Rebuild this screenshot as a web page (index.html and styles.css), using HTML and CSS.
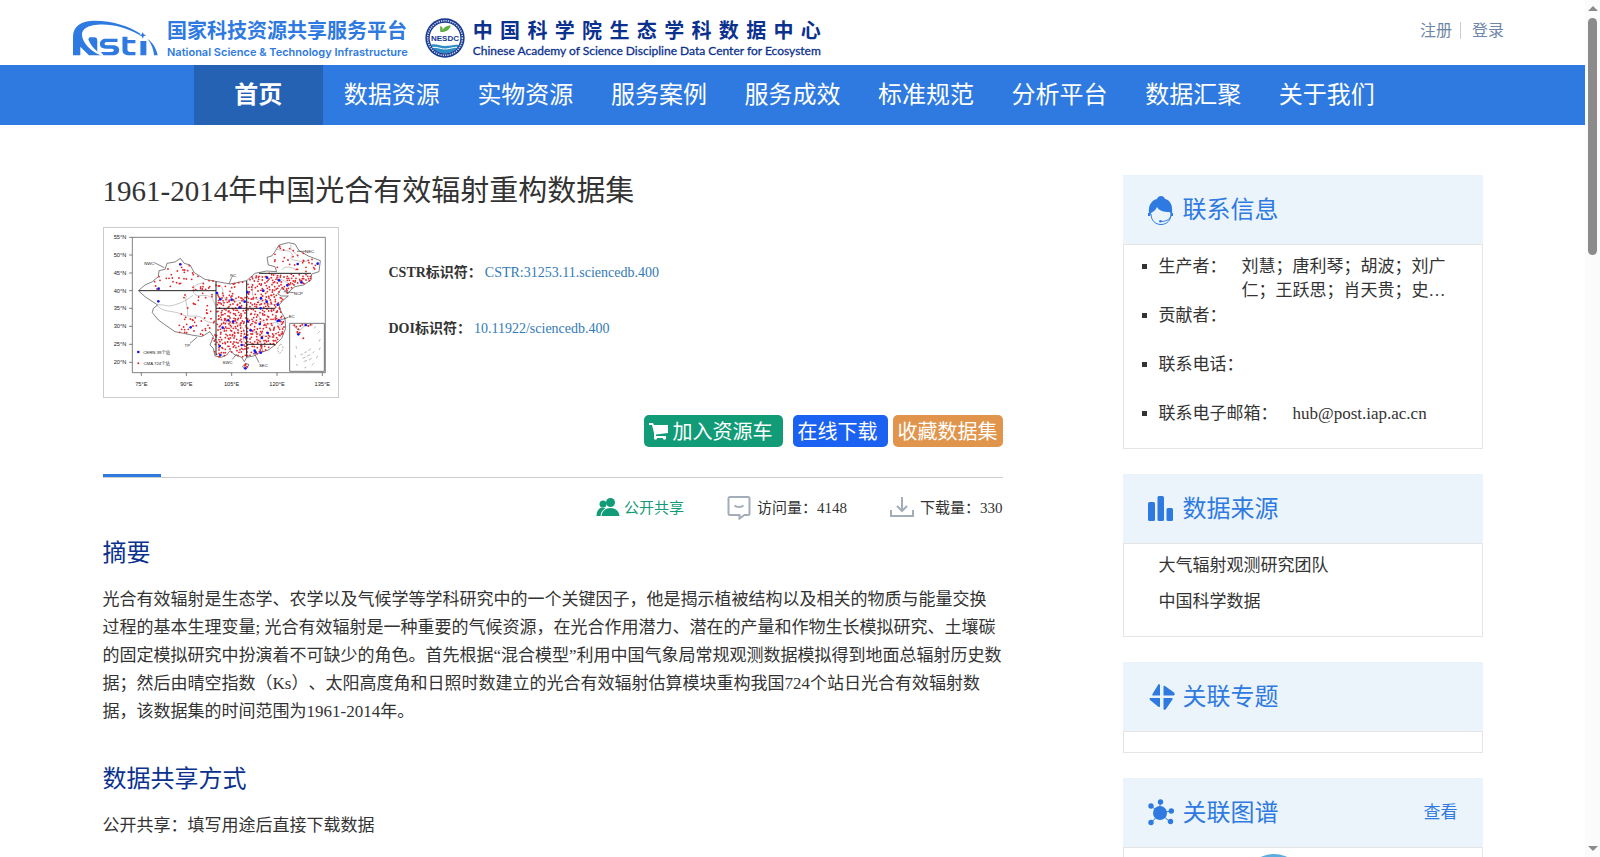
FILE: index.html
```html
<!DOCTYPE html>
<html lang="zh-CN">
<head>
    <meta charset="UTF-8">
    <meta name="viewport" content="width=device-width, initial-scale=1.0">
    <title>1961-2014年中国光合有效辐射重构数据集</title>
    <link rel="stylesheet" href="styles.css">
</head>
<body>
    <div class="page">
        <header class="header">
            <a class="brand" href="#">
                <svg class="brand-mark" viewBox="0 0 256 108" aria-hidden="true">
                    <path d="M0 106V50C0 18 26 2 64 2c60 0 106 18 140 40l-4 3C160 22 118 11 74 14 46 16 27 26 27 44c1 24 26 50 57 62H48L22 80v26z"/>
                    <path d="M50 52h14q9 0 9 9v34C62 86 52 74 46 58z"/>
                    <path d="M134 66h-30c-6 0-9 2-9 5s3 5 9 5h15c13 0 20 5 20 14 0 11-8 16-20 16H92l-8-10h30c6 0 9-1 9-5 0-3-3-5-9-5H99c-12 0-18-5-18-14 0-10 7-16 19-16h34z"/>
                    <path d="M149 50h15v10h24v10h-24v19c0 5 3 7 8 7h16v10h-18c-14 0-21-5-21-16z"/>
                    <path d="M203 63h18v43h-18z"/>
                    <path d="M210 36l3 7 7 3-7 3-3 7-3-7-7-3 7-3z"/>
                    <path d="M224 56c16 12 27 28 31 50h-11c-1-18-8-35-20-50z"/>
                </svg>
                <span class="brand-text">
                    <span class="brand-cn">国家科技资源共享服务平台</span>
                    <span class="brand-en">National Science &amp; Technology Infrastructure</span>
                </span>
            </a>
            <a class="center" href="#">
                <svg class="center-mark" viewBox="0 0 120 120" aria-hidden="true">
                    <circle cx="60" cy="60" r="59" fill="#17388f"/>
                    <circle cx="60" cy="60" r="52" fill="none" stroke="#c9d3ea" stroke-width="5" stroke-dasharray="4 3"/>
                    <circle cx="60" cy="60" r="46" fill="#fff"/>
                    <path d="M18 80c14-4 26 4 42 4s28-6 42-3c-7 15-22 25-42 25S25 96 18 80z" fill="#2f8fc4"/>
                    <path d="M22 88c16-2 26 6 40 5s24-6 34-5" fill="none" stroke="#fff" stroke-width="3"/>
                    <path d="M46 42c-1-8 0-12-1-18 8 2 9 8 8 14 2-10 12-14 24-16-2 10-8 18-22 20z" fill="#5fae45"/>
                    <text x="60" y="68" text-anchor="middle">NESDC</text>
                </svg>
                <span class="center-text">
                    <span class="center-cn">中国科学院生态学科数据中心</span>
                    <span class="center-en">Chinese Academy of Science Discipline Data Center for Ecosystem</span>
                </span>
            </a>
            <div class="account">
                <a href="#">注册</a>
                <a href="#">登录</a>
            </div>
        </header>

        <nav class="nav">
            <div class="nav-inner">
                <a class="active" href="#">首页</a>
                <a href="#">数据资源</a>
                <a href="#">实物资源</a>
                <a href="#">服务案例</a>
                <a href="#">服务成效</a>
                <a href="#">标准规范</a>
                <a href="#">分析平台</a>
                <a href="#">数据汇聚</a>
                <a href="#">关于我们</a>
            </div>
        </nav>

        <div class="container">
            <main class="detail">
                <h1>1961-2014年中国光合有效辐射重构数据集</h1>
                <div class="summary">
                    <svg class="thumb" id="station-map" viewBox="27 24 702 507" role="img" aria-label="站点分布图">
                        <g class="land">
                            <path id="outline" d="M130 212L150 195L172 185L190 170L192 152L210 148L216 130L240 126L256 115L268 130L285 135L298 158L330 178L362 184L405 192L455 182L480 160L515 153L545 155L540 140L520 135L516 112L530 108L540 95L552 75L580 68L600 72L612 92L640 108L676 122L672 155L650 162L648 180L625 195L600 200L585 212L578 222L572 212L560 205L548 222L560 228L580 228L565 240L552 255L558 275L570 295L572 325L560 355L540 375L520 390L490 400L475 408L455 412L448 425L440 412L420 405L405 392L395 405L378 412L360 408L355 385L345 375L355 350L345 335L320 350L290 345L265 340L240 335L215 318L190 300L172 278L175 265L188 255L165 240L150 230Z"/>
                            <path d="M443 438L452 430L462 434L455 446L446 445Z"/>
                        </g>
                        <g class="province">
                            <path d="M298 200c8-10 20-8 30-14M295 195c6 12-4 20 4 28s30 0 44 6 14 24 20 30M184 256c20-6 30 6 50 0s34-10 60-30M186 256c16 20 40 16 60 22s20 12 50 10 26 20 60 20M274 228c-6 20 6 30 4 58"/>
                            <path d="M540 82c10 14 30 4 46 14s-10 20 10 24 30 6 44 2M588 74c-6 20 20 24 22 40M560 150c10-14 30-10 42 0M380 200c10 20-6 30 20 40s34-6 56 8M470 190c10 20-10 40 20 50s30 20 60 10M480 280c20 10 20 40 50 30s20 20 40 10M380 300c20 20 40 0 60 20s-10 40 16 50M470 340c20-10 40 20 70 10M500 350c-10 20 10 30 0 46M540 160c10 20 30 20 50 36"/>
                        </g>
                        <g id="dots" fill="#e0262c"></g>
                        <path class="grid" d="M132 212H363M363 184V405M455 182V412M363 265H541M492 160H648M455 373H540"/>
                        <g class="pointer">
                            <path d="M178 128L208 143M410 172L402 192M606 94L632 94M566 215L596 218M556 300L580 292M306 352L285 370M412 418L425 402M480 404L492 428"/>
                        </g>
                        <g class="inset">
                            <path class="box" d="M584 310H688V454H584Z"/>
                            <path d="M592 314c8 10 10 6 14 14l10 2 12-12 26-4M604 340l8-4M658 325l4-6M668 340l6-6M672 365l4-8M672 390l4-8M664 415l4-8M650 436l6-6M628 444l6-3M604 432l4 6M600 405l2 8M603 378l2 8M616 405l8-4M628 398l8-3M640 392l8-6M622 415l10-4M636 408l10-4M626 425l10-4M642 420l8-5M652 400l6-6"/>
                        </g>
                        <g id="inset-dots" fill="#e0262c"></g>
                        <path class="taiwan" d="M556 373c8 0 10 10 6 18l-8 10c-8-6-8-20 2-28z"/>
                        <g id="cern" fill="#1414f0"></g>
                        <path class="frame" d="M112 52H691V458H112ZM112 52h-10M112 105h-10M112 159h-10M112 212h-10M112 265h-10M112 319h-10M112 373h-10M112 427h-10M139 458v10M274 458v10M410 458v10M546 458v10M682 458v10"/>
                        <g class="axis">
                            <text x="75" y="58">55°N</text>
                            <text x="75" y="111">50°N</text>
                            <text x="75" y="165">45°N</text>
                            <text x="75" y="218">40°N</text>
                            <text x="75" y="271">35°N</text>
                            <text x="75" y="325">30°N</text>
                            <text x="75" y="379">25°N</text>
                            <text x="75" y="433">20°N</text>
                            <text x="139" y="497">75°E</text>
                            <text x="274" y="497">90°E</text>
                            <text x="410" y="497">105°E</text>
                            <text x="546" y="497">120°E</text>
                            <text x="682" y="497">135°E</text>
                        </g>
                        <g class="region">
                            <text x="163" y="134">NWC</text>
                            <text x="415" y="170">NC</text>
                            <text x="644" y="98">NEC</text>
                            <text x="610" y="225">NCP</text>
                            <text x="590" y="294">EC</text>
                            <text x="277" y="382">TP</text>
                            <text x="398" y="431">SWC</text>
                            <text x="505" y="442">SEC</text>
                            <text x="185" y="401">CERN 39个站</text>
                            <text x="185" y="436">CMA 724个站</text>
                        </g>
                    </svg>
                    <dl class="identifiers">
                        <div>
                            <dt>CSTR标识符：</dt>
                            <dd><a href="#">CSTR:31253.11.sciencedb.400</a></dd>
                        </div>
                        <div>
                            <dt>DOI标识符：</dt>
                            <dd><a href="#">10.11922/sciencedb.400</a></dd>
                        </div>
                    </dl>
                </div>

                <div class="actions">
                    <button type="button" class="btn btn-cart">
                        <svg viewBox="0 0 19 18" aria-hidden="true">
                            <path d="M0 1h4l1 2h14v8L7 12.500v1.500h10v2H5V11L3 3H0z"/>
                            <circle cx="6.500" cy="16" r="1.700"/>
                            <circle cx="15.500" cy="16" r="1.700"/>
                        </svg>
                        加入资源车
                    </button>
                    <button type="button" class="btn btn-download">在线下载</button>
                    <button type="button" class="btn btn-favorite">收藏数据集</button>
                </div>

                <div class="divider"></div>

                <ul class="stats">
                    <li class="open">
                        <svg viewBox="0 0 23 24" aria-hidden="true">
                            <circle cx="6.500" cy="8" r="3.500"/>
                            <path d="M0 20c0-5 2-8 6-8.500l3 1C6 14 4.500 16 4 20z"/>
                            <circle cx="14" cy="6.500" r="4.500"/>
                            <path d="M5 20c.5-5 4-8 9-8s8.500 3 9 8z"/>
                        </svg>
                        公开共享
                    </li>
                    <li>
                        <svg class="line" viewBox="0 0 23 24" aria-hidden="true">
                            <path d="M2 1h18.500q1.500 0 1.500 1.500v15q0 1.500-1.500 1.500H17l-5 3.500V19H2.500Q1 19 1 17.500v-15Q1 1 2.500 1M7 9.500c2 2 7 2 9 0"/>
                        </svg>
                        访问量：4148
                    </li>
                    <li>
                        <svg class="line" viewBox="0 0 24 24" aria-hidden="true">
                            <path d="M12 1v14M7 10l5 5 5-5M1 14v6h22v-6"/>
                        </svg>
                        下载量：330
                    </li>
                </ul>

                <section>
                    <h2>摘要</h2>
                    <p>光合有效辐射是生态学、农学以及气候学等学科研究中的一个关键因子，他是揭示植被结构以及相关的物质与能量交换过程的基本生理变量; 光合有效辐射是一种重要的气候资源，在光合作用潜力、潜在的产量和作物生长模拟研究、土壤碳的固定模拟研究中扮演着不可缺少的角色。首先根据“混合模型”利用中国气象局常规观测数据模拟得到地面总辐射历史数据；然后由晴空指数（Ks）、太阳高度角和日照时数建立的光合有效辐射估算模块重构我国724个站日光合有效辐射数据，该数据集的时间范围为1961-2014年。</p>
                </section>
                <section>
                    <h2>数据共享方式</h2>
                    <p>公开共享：填写用途后直接下载数据</p>
                </section>
            </main>

            <aside class="sidebar">
                <section class="card">
                    <header>
                        <svg viewBox="0 0 26 30" aria-hidden="true">
                            <path d="M1 17C0 9 4 4 9 3c1-4 7-4 8 0 5 1 8 6 7 14h1v3h-2c0-2-1-4-2-4-5 0-10-1-12-5-1 3-4 5-6 6l-1 3H0v-3z"/>
                            <path class="stroke" d="M3 18c0 6 4 10.500 10 10.500S23 24 23 18M13 25.500c5 0 9-2 10-6"/>
                            <circle cx="12.500" cy="25.300" r="1.300"/>
                        </svg>
                        <h3>联系信息</h3>
                    </header>
                    <ul class="contact">
                        <li><span>生产者：</span><span class="value">刘慧；唐利琴；胡波；刘广仁；王跃思；肖天贵；史…</span></li>
                        <li><span>贡献者：</span></li>
                        <li><span>联系电话：</span></li>
                        <li><span>联系电子邮箱：</span><span class="value">hub@post.iap.ac.cn</span></li>
                    </ul>
                </section>

                <section class="card">
                    <header>
                        <svg viewBox="0 0 26 30" aria-hidden="true">
                            <rect x="0" y="7" width="7" height="19" rx="1.500"/>
                            <rect x="9.500" y="1" width="6.500" height="25" rx="1.500"/>
                            <rect x="18.500" y="13" width="6.500" height="13" rx="1.500"/>
                        </svg>
                        <h3>数据来源</h3>
                    </header>
                    <ul class="sources">
                        <li>大气辐射观测研究团队</li>
                        <li>中国科学数据</li>
                    </ul>
                </section>

                <section class="card">
                    <header>
                        <svg viewBox="0 0 26 30" aria-hidden="true">
                            <path d="M10 2q1-2 2 0v10.500H4.500Q4 12 4.500 11zM15.500 4q0-2 1.500-1l9 6.500q1.500 2 0 3H15.500zM12 15v8.500q-1 1-2 0L2 17q-1-2 0-2zM15.500 15H24q1 0 .5 1.500L18 26q-2.500 2-2.500-.5z"/>
                        </svg>
                        <h3>关联专题</h3>
                    </header>
                    <div class="empty"></div>
                </section>

                <section class="card">
                    <header>
                        <svg viewBox="0 0 26 30" aria-hidden="true">
                            <path class="stroke" d="M12 14L3 7M12 14V3M12 14l11-2M12 14L3 24M12 14l10 9"/>
                            <circle cx="12" cy="14" r="7"/>
                            <circle cx="3" cy="7" r="2.700"/>
                            <circle cx="12.500" cy="3" r="2.700"/>
                            <circle cx="23.300" cy="12" r="2.700"/>
                            <circle cx="3" cy="23.500" r="2.700"/>
                            <circle cx="22.500" cy="22.500" r="2.700"/>
                        </svg>
                        <h3>关联图谱</h3>
                        <a href="#">查看</a>
                    </header>
                    <div class="graph">
                        <svg viewBox="0 0 60 60" aria-hidden="true"><circle cx="30" cy="30" r="30"/></svg>
                    </div>
                </section>
            </aside>
        </div>
    </div>

    <div class="scrollbar" aria-hidden="true">
        <span class="arrow up"></span>
        <span class="thumb-bar"></span>
        <span class="arrow down"></span>
    </div>

    <script src="map.js"></script>
</body>
</html>
```
FILE: styles.css
```css
* {
    box-sizing: border-box;
}
body {
    margin: 0;
    display: flex;
    height: 100vh;
    overflow: hidden;
    font-family: "Liberation Serif", "Noto Sans CJK SC", serif;
    font-size: 17px;
    text-spacing-trim: space-all;
    color: #333;
    background-color: #fff;
}
a {
    color: inherit;
    text-decoration: none;
}
h1, h2, h3, p, ul, dl, dd {
    margin: 0;
    padding: 0;
    font-weight: normal;
}
ul {
    list-style: none;
}
.page {
    flex: 1;
    overflow: hidden;
}

/* header */
.header {
    display: flex;
    align-items: flex-start;
    height: 65px;
    padding: 17px 81px 0 73px;
}
.brand {
    display: flex;
    gap: 9px;
    color: #2e7ae0;
}
.brand-mark {
    width: 85px;
    height: 36px;
    margin-top: 3px;
    fill: #2e7ae0;
}
.brand-text,
.center-text {
    display: flex;
    flex-direction: column;
    white-space: nowrap;
}
.brand-cn,
.center-cn {
    font: bold 20px/26px "Noto Sans CJK SC", sans-serif;
}
.brand-en {
    font: 600 11px/18px Inter, sans-serif;
}
.center {
    display: flex;
    gap: 8px;
    margin-left: 17px;
    color: #0b318f;
}
.center-mark {
    width: 40px;
    height: 40px;
    margin-top: 1px;
}
.center-mark text {
    font: bold 24px "Liberation Sans", sans-serif;
    fill: #17388f;
}
.center-cn {
    text-align: justify;
    text-align-last: justify;
}
.center-en {
    font: 12px/16px Lato, sans-serif;
    -webkit-text-stroke: 0.3px #0b318f;
}
.account {
    display: flex;
    margin-left: auto;
    margin-top: 5px;
    font-size: 16px;
    line-height: 17px;
    color: #6f87a6;
}
.account a + a {
    margin-left: 8px;
    padding-left: 11px;
    border-left: 1px solid #c5cfdc;
}

/* nav */
.nav {
    background-color: #2e7ae0;
}
.nav-inner {
    display: grid;
    grid-template-columns: repeat(9, 1fr);
    gap: 4px;
    max-width: 1198px;
    margin: 0 auto;
}
.nav a {
    font-size: 24px;
    line-height: 60px;
    text-align: center;
    color: #fff;
}
.nav a.active {
    background-color: #2562b4;
    font-weight: bold;
}

/* layout */
.container {
    display: flex;
    justify-content: space-between;
    align-items: flex-start;
    max-width: 1380px;
    margin: 0 auto;
    padding-top: 50px;
}
.detail {
    width: 900px;
}
.sidebar {
    width: 360px;
}

/* detail */
.detail h1 {
    font-size: 29px;
    line-height: 32px;
    margin-bottom: 20px;
}
.summary {
    display: flex;
    gap: 50px;
}
.thumb {
    width: 236px;
    height: 171px;
    border: 1px solid #ccc;
}
.thumb .land,
.thumb .pointer,
.thumb .inset,
.thumb .frame,
.thumb .taiwan {
    fill: none;
    stroke: #444;
    stroke-width: 2;
}
.thumb .province {
    fill: none;
    stroke: #aaa;
    stroke-width: 2;
}
.thumb .grid {
    fill: none;
    stroke: #222;
    stroke-width: 3;
}
.thumb .inset {
    stroke: #999;
}
.thumb .inset .box {
    fill: #fff;
    stroke: #777;
    stroke-width: 3;
}
.thumb .taiwan {
    stroke-dasharray: 6 4;
    stroke: #888;
}
.thumb text {
    font-family: "Liberation Sans", "Noto Sans CJK SC", sans-serif;
    text-anchor: middle;
    fill: #222;
}
.thumb .axis {
    font-size: 17px;
}
.thumb .region {
    font-size: 13px;
}
.identifiers {
    padding-top: 18px;
    font-size: 14px;
    line-height: 56px;
}
.identifiers div {
    display: flex;
    gap: 3px;
}
.identifiers dt {
    font-weight: bold;
}
.identifiers a {
    color: #337ab7;
}
.actions {
    display: flex;
    justify-content: flex-end;
    gap: 5px;
    margin-top: 17px;
}
.btn {
    display: flex;
    align-items: center;
    gap: 5px;
    height: 32px;
    padding: 0 5px 2px;
    border: none;
    border-radius: 5px;
    font-family: inherit;
    font-size: 20px;
    color: #fff;
    cursor: pointer;
}
.btn svg {
    width: 19px;
    height: 18px;
    margin-top: 2px;
    fill: #fff;
}
.btn-cart {
    padding-right: 10px;
    margin-right: 5px;
    background-color: #119b76;
}
.btn-download {
    padding-right: 10px;
    background-color: #1b61f2;
}
.btn-favorite {
    background-color: #e0944c;
}
.divider {
    margin-top: 27px;
    border-bottom: 1px solid #ccc;
}
.divider::before {
    content: "";
    display: block;
    width: 58px;
    height: 3px;
    background-color: #2e7ae0;
}
.stats {
    display: flex;
    justify-content: flex-end;
    gap: 43px;
    margin-top: 18px;
    font-size: 15px;
    line-height: 24px;
}
.stats li {
    display: flex;
    gap: 6px;
}
.stats svg {
    width: 24px;
    height: 24px;
    fill: #119b76;
}
.stats .line {
    fill: none;
    stroke: #a3adba;
    stroke-width: 2;
}
.stats .open {
    gap: 4px;
    color: #119b76;
}
.detail h2 {
    margin: 17px 0;
    font-size: 24px;
    line-height: 32px;
    color: #0b318f;
}
.detail p {
    line-height: 28px;
}
.detail section + section {
    margin-top: 37px;
}

/* sidebar */
.card {
    margin-bottom: 25px;
}
.card header {
    display: flex;
    align-items: center;
    gap: 9px;
    height: 69px;
    padding: 0 25px 4px;
    color: #2e7ae0;
    background-color: #ecf4fb;
}
.card header svg {
    width: 26px;
    height: 30px;
    margin-top: 6px;
    fill: #2e7ae0;
    overflow: visible;
}
.card header .stroke {
    fill: none;
    stroke: #2e7ae0;
}
.card h3 {
    font-size: 24px;
}
.card header a {
    margin-left: auto;
}
.contact,
.sources,
.empty,
.graph {
    border: 1px solid #e5e5e5;
}
.contact {
    padding: 10px 34px 22px 18px;
    line-height: 24px;
}
.contact li {
    display: flex;
    height: 49px;
}
.contact li:last-child {
    height: 24px;
}
.contact li::before {
    content: "";
    flex: none;
    width: 5px;
    height: 5px;
    margin: 9px 12px 0 0;
    background-color: #333;
}
.contact span {
    flex: none;
}
.contact .value {
    flex: 1;
    margin-left: 15px;
}
.sources {
    padding: 4px 35px 16px;
    line-height: 36px;
}
.empty {
    height: 22px;
}
.graph {
    padding: 6px 120px;
}
.graph svg {
    display: block;
    width: 60px;
    fill: #5dade2;
}

/* scrollbar */
.scrollbar {
    display: flex;
    flex-direction: column;
    align-items: center;
    width: 15px;
    padding: 6px 0;
    background-color: #fbfbfb;
}
.arrow {
    border: 5px solid transparent;
}
.arrow.up {
    border-top: none;
    border-bottom-color: #8b8b8b;
}
.arrow.down {
    border-bottom: none;
    border-top-color: #8b8b8b;
    margin-top: auto;
}
.thumb-bar {
    width: 9px;
    height: 28%;
    margin-top: 7px;
    border-radius: 5px;
    background-color: #8b8b8b;
}
```
FILE: map.js
```js
// station dots on the thumbnail map
const SVG_NS = "http://www.w3.org/2000/svg";
const outline = document.getElementById("outline").getAttribute("d")
    .replace("Z", "").slice(1).split("L").map(p => p.split(" ").map(Number));

let seed = 7;
function random() {
    seed = (seed * 16807) % 2147483647;
    return seed / 2147483647;
}

function inside(x, y) {
    let hit = false;
    for (let i = 0, j = outline.length - 1; i < outline.length; j = i++) {
        const [xi, yi] = outline[i];
        const [xj, yj] = outline[j];
        if ((yi > y) !== (yj > y) && x < (xj - xi) * (y - yi) / (yj - yi) + xi) {
            hit = !hit;
        }
    }
    return hit;
}

// east is dense, the plateau and the desert are nearly empty
function density(x, y) {
    if (x < 363) {
        if (y < 200) return 0.22;
        if (x > 250 && y > 290) return 0.35;
        return x > 290 ? 0.24 : 0.05;
    }
    if (y < 160) return 0.28;
    if (y < 225 && x < 455) return 0.25;
    return 0.85;
}

function addDot(parent, x, y, r) {
    const dot = document.createElementNS(SVG_NS, "circle");
    dot.setAttribute("cx", x);
    dot.setAttribute("cy", y);
    dot.setAttribute("r", r);
    parent.appendChild(dot);
}

const dots = document.getElementById("dots");
for (let y = 66; y < 425; y += 8) {
    for (let x = 130; x < 680; x += 9) {
        const px = Math.round(x + random() * 9);
        const py = Math.round(y + random() * 8);
        if (random() < density(px, py) && inside(px, py)) {
            addDot(dots, px, py, 2.7);
        }
    }
}
[[450, 437], [456, 440], [452, 433]].forEach(p => addDot(dots, p[0], p[1], 3));

const insetDots = document.getElementById("inset-dots");
[
    [130, 430], [598, 316], [604, 320], [610, 328], [607, 336], [614, 338],
    [625, 355], [616, 318], [622, 314], [640, 318], [647, 314]
].forEach(p => addDot(insetDots, p[0], p[1], 3));

const cern = document.getElementById("cern");
[
    [256, 133], [191, 206], [190, 244], [287, 322], [366, 219], [376, 238], [410, 239],
    [449, 245], [457, 217], [434, 263], [516, 173], [552, 181], [608, 132], [668, 131],
    [619, 187], [577, 196], [505, 212], [498, 235], [515, 245], [548, 254], [497, 265],
    [400, 301], [414, 305], [383, 323], [457, 304], [494, 312], [467, 331], [518, 339],
    [452, 352], [501, 354], [440, 375], [374, 378], [376, 405], [479, 392], [482, 397],
    [497, 398], [548, 303], [553, 302], [451, 445], [610, 343], [632, 315], [130, 396]
].forEach(p => addDot(cern, p[0], p[1], 4));
```
